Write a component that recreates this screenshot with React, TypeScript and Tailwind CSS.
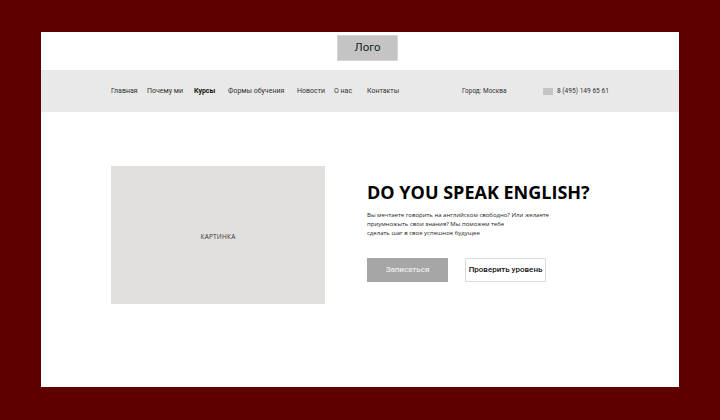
import React from "react";

const nav = [
  { t: "Главная", w: "w-[36px]" },
  { t: "Почему ми", w: "w-[47px]" },
  { t: "Курсы", w: "w-[34px]", b: true },
  { t: "Формы обучения", w: "w-[69px]" },
  { t: "Новости", w: "w-[37px]" },
  { t: "О нас", w: "w-[33px]" },
  { t: "Контакты", w: "w-[95px]" },
];

export default function App() {
  return (
    <div className="w-[720px] h-[420px] bg-[#5f0000] pt-[32px] pl-[41px] overflow-hidden">
      <div className="w-[638px] h-[355px] bg-white flex flex-col">
        <div className="h-[38px] pl-[296px] pt-[3px]">
          <div className="w-[61px] h-[26px] bg-[#c4c4c4] border border-[#d6d6d6] flex items-center justify-center text-[11.5px] text-[#222]" style={{ fontFamily: "Roboto, sans-serif" }}>
            Лого
          </div>
        </div>
        <div className="h-[42px] bg-[#e9e9e9] flex items-center pl-[70px] pt-[1px] text-[7px] text-[#333]" style={{ fontFamily: "Roboto, sans-serif" }}>
          {nav.map((n) => (
            <span key={n.t} className={`${n.w} shrink-0 whitespace-nowrap ${n.b ? "font-bold text-[#111]" : ""}`}>
              {n.t}
            </span>
          ))}
          <span className="w-[81px] shrink-0 whitespace-nowrap text-[6.5px]">Город: Москва</span>
          <span className="w-[10px] h-[7px] bg-[#c4c4c4] shrink-0"></span>
          <span className="ml-[4px] whitespace-nowrap text-[6.6px]">8 (495) 149 65 61</span>
        </div>
        <div className="flex pl-[70px] pt-[54px]">
          <div className="w-[214px] h-[138px] bg-[#e2e0df] flex items-center justify-center pt-[4px] text-[6.5px] text-[#333] tracking-[0.2px]" style={{ fontFamily: "'Open Sans', sans-serif" }}>
            КАРТИНКА
          </div>
          <div className="ml-[42px] pt-[15px] flex flex-col">
            <h1 className="text-[18px] font-bold leading-[22px] text-black" style={{ fontFamily: "'Open Sans', sans-serif" }}>
              DO YOU SPEAK ENGLISH?
            </h1>
            <p className="mt-[8px] text-[6px] leading-[9px] text-[#222]" style={{ fontFamily: "'Open Sans', sans-serif" }}>
              Вы мечтаете говорить на английском свободно? Или желаете
              <br />
              приумножыть свои знания? Мы поможем тебе
              <br />
              сделать шаг в свое успешное будущее
            </p>
            <div className="flex mt-[20px] gap-[17px]" style={{ fontFamily: "Roboto, sans-serif" }}>
              <div className="w-[81px] h-[24px] bg-[#a6a6a6] flex items-center justify-center text-[8px] font-medium text-[#ececec]">
                Записаться
              </div>
              <div className="w-[81px] h-[24px] bg-white border border-[#dcdcdc] flex items-center justify-center text-[8px] font-medium text-[#111]">
                Проверить уровень
              </div>
            </div>
          </div>
        </div>
      </div>
    </div>
  );
}
